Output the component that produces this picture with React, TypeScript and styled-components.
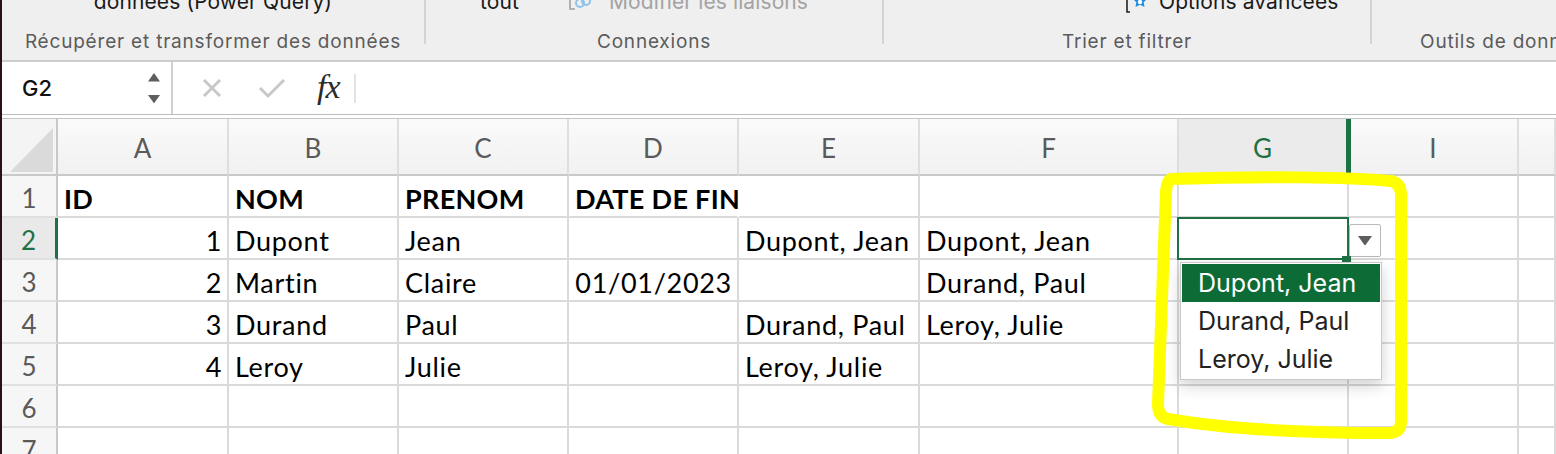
import React from "react";
import styled, { createGlobalStyle, css } from "styled-components";

const GlobalStyle = createGlobalStyle`
  html, body {
    margin: 0;
    padding: 0;
    background: #fff;
    overflow: hidden;
  }
`;

const GREEN = "#1e7145";
const UI_FONT = `Inter, "Liberation Sans", sans-serif`;
const SHEET_FONT = `Lato, "Open Sans", sans-serif`;

const Window = styled.div`
  position: relative;
  width: 1556px;
  height: 454px;
  box-sizing: border-box;
  border-left: 2px solid #2a0f16;
  overflow: hidden;
  display: flex;
  flex-direction: column;
  background: #fff;
`;

/* ribbon */

const Ribbon = styled.div`
  display: flex;
  align-items: flex-start;
  flex-shrink: 0;
  height: 60px;
  background: #efefef;
  border-bottom: 2px solid #cdcdcd;
  font-family: ${UI_FONT};
  overflow: hidden;
`;

const Group = styled.div<{ $width: number }>`
  flex: 0 0 ${(p) => p.$width}px;
  height: 60px;
  display: flex;
  flex-direction: column;
  align-items: center;
`;

const Divider = styled.div`
  flex: 0 0 2px;
  height: 44px;
  background: #d3d3d3;
`;

const TopRow = styled.div<{ $start?: number }>`
  align-self: stretch;
  display: flex;
  align-items: center;
  justify-content: ${(p) => (p.$start !== undefined ? "flex-start" : "center")};
  padding-left: ${(p) => p.$start ?? 0}px;
  margin-top: -12px;
  height: 26px;
  font-size: 21px;
  letter-spacing: 0.1px;
  color: #1a1a1a;
  white-space: nowrap;
`;

const RibbonText = styled.span<{ $muted?: boolean; $gap?: number }>`
  margin-left: ${(p) => p.$gap ?? 0}px;
  color: ${(p) => (p.$muted ? "#a3a3a3" : "#1a1a1a")};
`;

const GroupLabel = styled.div`
  margin-top: auto;
  padding-bottom: 6px;
  line-height: 24px;
  font-size: 19px;
  letter-spacing: 0.8px;
  color: #5b5b5b;
  white-space: nowrap;
`;

/* formula bar */

const FormulaBar = styled.div`
  display: flex;
  align-items: stretch;
  flex-shrink: 0;
  height: 52px;
  border-bottom: 1px solid #bdbdbd;
  font-family: ${UI_FONT};
`;

const NameBox = styled.div`
  flex: 0 0 171px;
  box-sizing: border-box;
  display: flex;
  align-items: center;
  justify-content: space-between;
  padding: 0 11px 0 20px;
  border-right: 2px solid #cfcfcf;
  font-size: 22px;
  font-weight: 500;
  color: #111;
`;

const Spinner = styled.div`
  display: flex;
  flex-direction: column;
  gap: 13px;
`;

const FormulaTools = styled.div`
  display: flex;
  align-items: center;
  flex: 1;
`;

const ToolIcon = styled.span<{ $gap: number }>`
  display: flex;
  margin-left: ${(p) => p.$gap}px;
`;

const Fx = styled.span`
  margin-left: 31px;
  margin-bottom: 3px;
  font-family: "Liberation Serif", serif;
  font-style: italic;
  font-size: 34px;
  color: #2b2b2b;
  letter-spacing: -1px;
`;

const ToolSep = styled.div`
  width: 2px;
  height: 29px;
  margin-left: 14px;
  background: #e3e3e3;
`;

/* sheet */

const Grid = styled.div`
  margin-top: 3px;
  border-top: 1px solid #c4c4c4;
  display: grid;
  grid-template-columns: 56px 171px 170px 170px 170px 181px 259px 170px 170px 1fr;
  grid-template-rows: 57px repeat(7, 42px);
  font-family: ${SHEET_FONT};
`;

const Corner = styled.div`
  box-sizing: border-box;
  display: flex;
  align-items: flex-end;
  justify-content: flex-end;
  padding: 0 3px 2px 0;
  background: #f4f4f4;
  border-right: 2px solid #c8c8c8;
  border-bottom: 2px solid #c9c9c9;
`;

const CornerTriangle = styled.div`
  width: 43px;
  height: 44px;
  background: #dadada;
  clip-path: polygon(100% 0, 100% 100%, 0 100%);
`;

const ColHeader = styled.div<{ $active?: boolean }>`
  box-sizing: border-box;
  display: flex;
  align-items: center;
  justify-content: center;
  padding-top: 2px;
  background: linear-gradient(#fafafa, #f1f1f1);
  border-right: 2px solid #dedede;
  border-bottom: 2px solid #c9c9c9;
  font-size: 26px;
  color: #5a5a5a;
  ${(p) =>
    p.$active &&
    css`
      position: relative;
      z-index: 1;
      background: #ebebeb;
      color: ${GREEN};
      border-right: 3px solid ${GREEN};
      box-shadow: 2px 0 0 ${GREEN};
    `}
`;

const RowHeader = styled.div<{ $active?: boolean }>`
  box-sizing: border-box;
  display: flex;
  align-items: center;
  justify-content: center;
  padding-top: 3px;
  background: #f6f6f6;
  border-right: 2px solid #c8c8c8;
  border-bottom: 2px solid #e0e0e0;
  font-size: 26px;
  color: #5a5a5a;
  ${(p) =>
    p.$active &&
    css`
      background: #e9e9e9;
      color: ${GREEN};
      border-right: 3px solid ${GREEN};
    `}
`;

const Cell = styled.div<{
  $right?: boolean;
  $bold?: boolean;
  $spill?: boolean;
  $selected?: boolean;
}>`
  box-sizing: border-box;
  display: flex;
  align-items: center;
  justify-content: ${(p) => (p.$right ? "flex-end" : "flex-start")};
  padding: 4px ${(p) => (p.$right ? 5 : 6)}px 0 6px;
  border-right: 2px solid ${(p) => (p.$spill ? "transparent" : "#dadada")};
  border-bottom: 2px solid #dadada;
  white-space: nowrap;
  font-size: 27px;
  letter-spacing: ${(p) => (p.$bold ? 0.3 : 0.7)}px;
  font-weight: ${(p) => (p.$bold ? 700 : 400)};
  color: #000;
  ${(p) =>
    p.$selected &&
    css`
      position: relative;
      z-index: 5;
      &::after {
        content: "";
        position: absolute;
        inset: -1px -2px -2px -2px;
        border: 2px solid ${GREEN};
      }
    `}
`;

const FillHandle = styled.div`
  position: absolute;
  right: -4px;
  bottom: -4px;
  width: 9px;
  height: 6px;
  background: ${GREEN};
  z-index: 1;
`;

const DropButton = styled.div`
  position: absolute;
  left: 170px;
  top: 6px;
  width: 32px;
  height: 33px;
  box-sizing: border-box;
  display: flex;
  align-items: center;
  justify-content: center;
  background: #fff;
  border: 1px solid #b9b9b9;
  border-radius: 2px;
`;

const DropList = styled.div`
  position: absolute;
  left: 1px;
  top: 44px;
  width: 202px;
  box-sizing: border-box;
  padding: 1px 1px;
  background: #fff;
  border: 1px solid #c9c9c9;
  box-shadow: 0 6px 14px rgba(0, 0, 0, 0.18);
  font-family: ${UI_FONT};
  letter-spacing: 0;
  z-index: 2;
`;

const DropItem = styled.div<{ $active?: boolean }>`
  height: 38px;
  display: flex;
  align-items: center;
  padding-left: 16px;
  font-size: 25px;
  color: ${(p) => (p.$active ? "#fff" : "#222")};
  background: ${(p) => (p.$active ? "#0d6b36" : "transparent")};
`;

const Annotation = styled.svg`
  position: absolute;
  left: -2px;
  top: 0;
  pointer-events: none;
  z-index: 10;
`;

/* icons */

const LinkIcon = () => (
  <svg width="26" height="26" viewBox="0 0 26 26">
    <path d="M3 6 V23 H8" fill="none" stroke="#a0a0a0" strokeWidth="1.6" />
    <circle cx="13" cy="17" r="4" fill="none" stroke="#8ec2ea" strokeWidth="2" />
    <circle cx="19" cy="15" r="4" fill="none" stroke="#8ec2ea" strokeWidth="2" />
  </svg>
);

const OptionsIcon = () => (
  <svg width="24" height="26" viewBox="0 0 24 26">
    <path d="M2 8 V24 H5" fill="none" stroke="#222" strokeWidth="1.6" />
    <path
      d="M15 6 l2.4 4.4 4.6 .7 -3.3 3.2 .8 4.6 -4.5 -2.2 -4.5 2.2 .8 -4.6 -3.3 -3.2 4.6 -.7z"
      fill="#1f8fe0"
    />
    <circle cx="15" cy="14" r="2.2" fill="#fff" />
  </svg>
);

const Triangle = ({ up, size = 12 }: { up?: boolean; size?: number }) => (
  <svg width={size} height={size * 0.7} viewBox="0 0 12 8.4">
    <path d={up ? "M0 8.4 L6 0 L12 8.4 Z" : "M0 0 L12 0 L6 8.4 Z"} fill="#5e5e5e" />
  </svg>
);

/* data */

const columns = ["A", "B", "C", "D", "E", "F", "G", "I", ""];

type CellData = { text?: string; right?: boolean; bold?: boolean; spill?: boolean };

const rows: CellData[][] = [
  [
    { text: "ID", bold: true },
    { text: "NOM", bold: true },
    { text: "PRENOM", bold: true },
    { text: "DATE DE FIN", bold: true, spill: true },
    {},
    {},
  ],
  [
    { text: "1", right: true },
    { text: "Dupont" },
    { text: "Jean" },
    {},
    { text: "Dupont, Jean" },
    { text: "Dupont, Jean" },
  ],
  [
    { text: "2", right: true },
    { text: "Martin" },
    { text: "Claire" },
    { text: "01/01/2023", right: true },
    {},
    { text: "Durand, Paul" },
  ],
  [
    { text: "3", right: true },
    { text: "Durand" },
    { text: "Paul" },
    {},
    { text: "Durand, Paul" },
    { text: "Leroy, Julie" },
  ],
  [
    { text: "4", right: true },
    { text: "Leroy" },
    { text: "Julie" },
    {},
    { text: "Leroy, Julie" },
    {},
  ],
  [],
  [],
];

const options = ["Dupont, Jean", "Durand, Paul", "Leroy, Julie"];

const App = () => {
  return (
    <>
      <GlobalStyle />
      <Window>
        <Ribbon>
          <Group $width={422}>
            <TopRow>données (Power Query)</TopRow>
            <GroupLabel>Récupérer et transformer des données</GroupLabel>
          </Group>
          <Divider />
          <Group $width={456}>
            <TopRow $start={54}>
              <RibbonText>tout</RibbonText>
              <RibbonText $gap={48}>
                <LinkIcon />
              </RibbonText>
              <RibbonText $muted $gap={16}>
                Modifier les liaisons
              </RibbonText>
            </TopRow>
            <GroupLabel>Connexions</GroupLabel>
          </Group>
          <Divider />
          <Group $width={486}>
            <TopRow $start={241}>
              <OptionsIcon />
              <RibbonText $gap={10}>Options avancées</RibbonText>
            </TopRow>
            <GroupLabel>Trier et filtrer</GroupLabel>
          </Group>
          <Divider />
          <Group $width={272}>
            <TopRow />
            <GroupLabel>Outils de données</GroupLabel>
          </Group>
        </Ribbon>

        <FormulaBar>
          <NameBox>
            G2
            <Spinner>
              <Triangle up />
              <Triangle />
            </Spinner>
          </NameBox>
          <FormulaTools>
            <ToolIcon $gap={29}>
              <svg width="20" height="20" viewBox="0 0 20 20">
                <path d="M2 2 L18 18 M18 2 L2 18" stroke="#c8c8c8" strokeWidth="3" />
              </svg>
            </ToolIcon>
            <ToolIcon $gap={36}>
              <svg width="28" height="22" viewBox="0 0 28 22">
                <path d="M2 11 L10 19 L26 3" fill="none" stroke="#c8c8c8" strokeWidth="3" />
              </svg>
            </ToolIcon>
            <Fx>fx</Fx>
            <ToolSep />
          </FormulaTools>
        </FormulaBar>

        <Grid>
          <Corner>
            <CornerTriangle />
          </Corner>
          {columns.map((c, i) => (
            <ColHeader key={i} $active={c === "G"}>
              {c}
            </ColHeader>
          ))}

          {rows.map((row, r) => (
            <React.Fragment key={r}>
              <RowHeader $active={r === 1}>{r + 1}</RowHeader>
              {columns.map((_, c) => {
                const d = row[c] || {};
                const selected = r === 1 && c === 6;
                return (
                  <Cell
                    key={c}
                    $right={d.right}
                    $bold={d.bold}
                    $spill={d.spill}
                    $selected={selected}
                  >
                    {d.text}
                    {selected && (
                      <>
                        <FillHandle />
                        <DropButton>
                          <Triangle size={14} />
                        </DropButton>
                        <DropList>
                          {options.map((o, i) => (
                            <DropItem key={o} $active={i === 0}>
                              {o}
                            </DropItem>
                          ))}
                        </DropList>
                      </>
                    )}
                  </Cell>
                );
              })}
            </React.Fragment>
          ))}
        </Grid>

        <Annotation width="1556" height="454" viewBox="0 0 1556 454">
          <path
            d="M1171 179 C1260 176 1350 177 1391 181 Q1401 183 1401 196 L1401 421 Q1401 433 1389 433 C1300 433 1220 428 1168 419 Q1158 417 1158 404 L1166 192 Q1167 180 1171 179"
            fill="none"
            stroke="#ffff00"
            strokeWidth="12"
            strokeLinecap="round"
            strokeLinejoin="round"
          />
        </Annotation>
      </Window>
    </>
  );
};

export default App;
